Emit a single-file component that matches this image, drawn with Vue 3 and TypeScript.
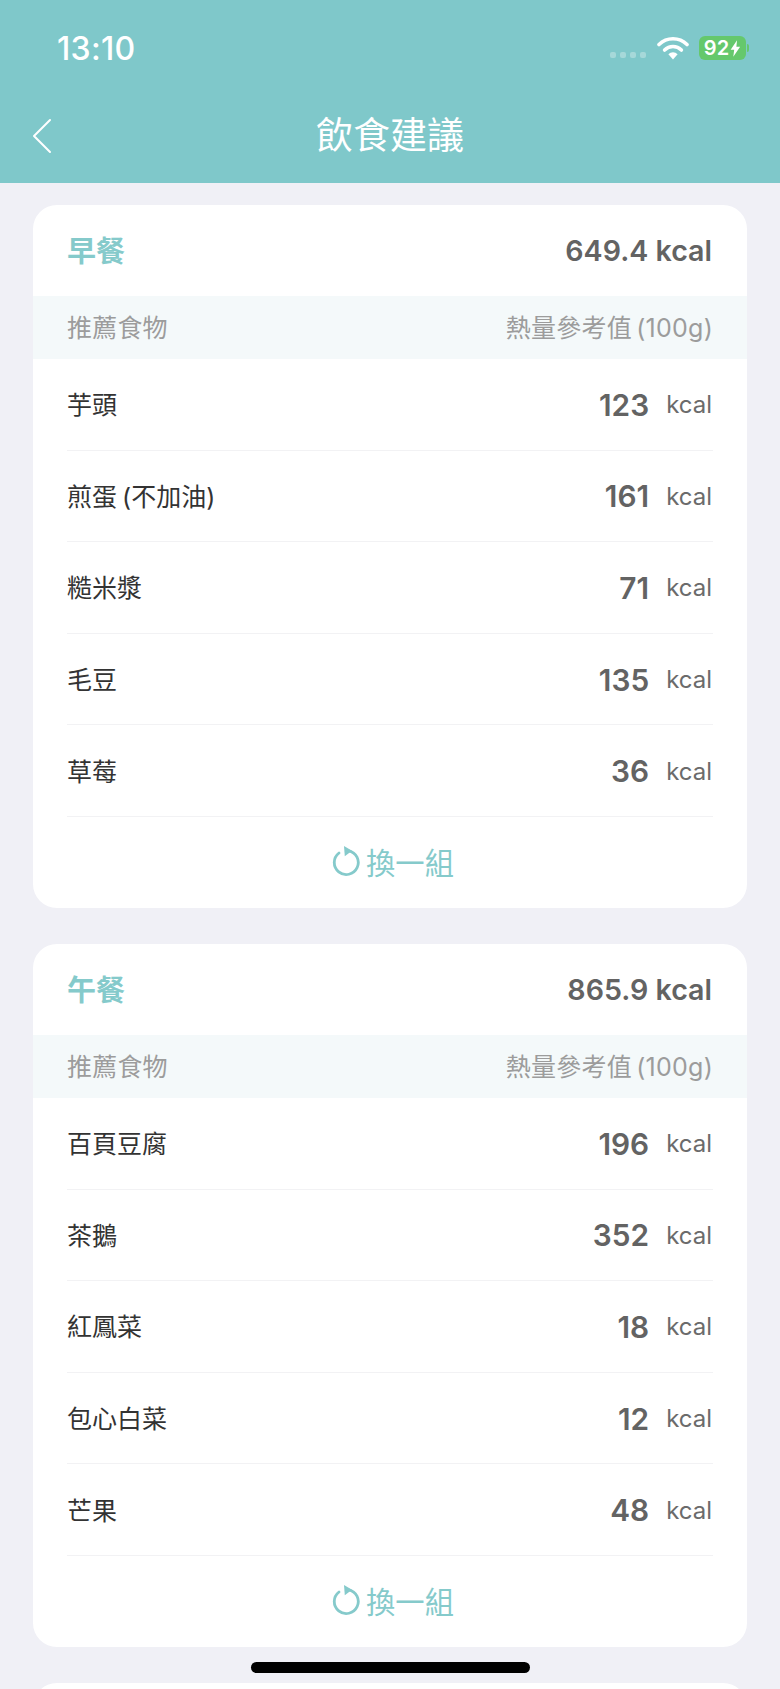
<script setup lang="ts">
interface Food { name: string; kcal: number }
interface Meal { title: string; total: string; foods: Food[] }
const meals: Meal[] = [
  { title: '早餐', total: '649.4 kcal', foods: [
    { name: '芋頭', kcal: 123 }, { name: '煎蛋 (不加油)', kcal: 161 }, { name: '糙米漿', kcal: 71 },
    { name: '毛豆', kcal: 135 }, { name: '草莓', kcal: 36 } ] },
  { title: '午餐', total: '865.9 kcal', foods: [
    { name: '百頁豆腐', kcal: 196 }, { name: '茶鵝', kcal: 352 }, { name: '紅鳳菜', kcal: 18 },
    { name: '包心白菜', kcal: 12 }, { name: '芒果', kcal: 48 } ] }
]
</script>

<template>
  <div class="page">
    <header class="top">
      <div class="status">
        <span class="time">13:10</span>
        <div class="status-right">
          <div class="dots"><i></i><i></i><i></i><i></i></div>
          <svg class="wifi" width="32" height="24" viewBox="0 0 32 24">
            <path d="M2 8.5a20 20 0 0 1 28 0" fill="none" stroke="#fff" stroke-width="3.6" stroke-linecap="round"/>
            <path d="M7.6 14a12 12 0 0 1 16.8 0" fill="none" stroke="#fff" stroke-width="3.6" stroke-linecap="round"/>
            <path d="M11.4 18.2a6.6 6.6 0 0 1 9.2 0L16 23.5z" fill="#fff"/>
          </svg>
          <div class="battery">
            <span class="pct">92</span>
            <svg width="11" height="17" viewBox="0 0 10 15"><path d="M6.4 0 0.6 8.6h3.2L3 15l6.2-9H5.8z" fill="#fff"/></svg>
          </div>
          <span class="nub"></span>
        </div>
      </div>
      <div class="nav">
        <svg class="back" width="20" height="36" viewBox="0 0 20 36">
          <path d="M18 2 2 18l16 16" fill="none" stroke="#fff" stroke-width="2" stroke-linecap="round" stroke-linejoin="round"/>
        </svg>
        <h1 class="title">飲食建議</h1>
      </div>
    </header>

    <main class="list">
      <section v-for="meal in meals" :key="meal.title" class="card">
        <div class="card-head">
          <span class="meal">{{ meal.title }}</span>
          <span class="total">{{ meal.total }}</span>
        </div>
        <div class="sub-head">
          <span class="sub-left">推薦食物</span>
          <span class="sub-right">熱量參考值 (100g)</span>
        </div>
        <div v-for="food in meal.foods" :key="food.name" class="row">
          <span class="name">{{ food.name }}</span>
          <span class="value"><b>{{ food.kcal }}</b><em>kcal</em></span>
        </div>
        <div class="swap">
          <svg width="28" height="30" viewBox="0 0 28 30">
            <path d="M7 7A12 12 0 1 0 16.7 4.8" fill="none" stroke="#85cacb" stroke-width="2.8" stroke-linecap="round"/>
            <path d="M12 0 20 4.8l-7.2 5.4z" fill="#85cacb"/>
          </svg>
          <span>換一組</span>
        </div>
      </section>
      <section class="card card-next"></section>
    </main>

    <div class="home"></div>
  </div>
</template>

<style>
html, body { margin: 0; background: #f0f0f6; }
</style>

<style scoped>
.page {
  position: relative;
  width: 780px;
  height: 1689px;
  overflow: hidden;
  background: #f0f0f6;
  font-family: Inter, "Noto Sans CJK TC", sans-serif;
}
.top {
  height: 183px;
  background: #7fc8ca;
  color: #fff;
  box-sizing: border-box;
  padding-top: 28px;
}
.status {
  display: flex;
  justify-content: space-between;
  align-items: center;
  height: 40px;
  padding: 0 31px 0 57px;
}
.time { font-size: 32px; font-weight: 500; letter-spacing: 0.3px; }
.status-right { display: flex; align-items: center; }
.dots { display: flex; gap: 4px; margin-right: 11px; margin-top: 14px; }
.dots i { width: 6px; height: 6px; border-radius: 2px; background: #a6d8d9; }
.wifi { margin-right: 10px; }
.battery {
  display: flex;
  align-items: center;
  justify-content: center;
  gap: 1px;
  width: 47px;
  height: 24px;
  border-radius: 6px;
  background: #65c86c;
}
.pct { font-size: 20px; font-weight: 600; line-height: 24px; }
.nub { width: 2px; height: 8px; margin-left: 1px; border-radius: 0 2px 2px 0; background: #65c86c; }
.nav {
  position: relative;
  display: flex;
  align-items: center;
  justify-content: center;
  height: 60px;
  margin-top: 38px;
}
.back { position: absolute; left: 32px; top: 12px; }
.title { margin: 0; font-size: 37px; font-weight: 400; line-height: 60px; }

.list {
  display: flex;
  flex-direction: column;
  gap: 36px;
  padding: 22px 33px 0;
}
.card {
  flex: none;
  background: #fff;
  border-radius: 24px;
  overflow: hidden;
}
.card-next { height: 200px; }
.card-head {
  display: flex;
  justify-content: space-between;
  align-items: center;
  height: 91px;
  padding: 0 34px;
}
.meal { font-size: 29px; font-weight: 700; color: #85cacb; margin-top: -3px; }
.total { font-size: 28.6px; font-weight: 600; color: #636363; padding-right: 1px; }
.sub-head {
  display: flex;
  justify-content: space-between;
  align-items: center;
  box-sizing: border-box;
  height: 63px;
  padding: 0 34px 3px;
  background: #f4f9fa;
  color: #9c9c9c;
}
.sub-left { font-size: 25px; letter-spacing: 0.2px; }
.sub-right { font-size: 25px; letter-spacing: 0.25px; word-spacing: -3px; }
.row {
  display: flex;
  justify-content: space-between;
  align-items: center;
  box-sizing: border-box;
  height: 91.6px;
  margin: 0 34px;
  padding-bottom: 2px;
  border-bottom: 1px solid #f2f2f4;
}
.name { font-size: 25px; color: #333; word-spacing: -2px; }
.value { display: flex; align-items: center; padding: 3px 1px 0 0; }
.value b { font-size: 29.8px; font-weight: 600; color: #636363; }
.value em { margin-left: 17px; font-size: 24px; font-style: normal; color: #6b6b6b; }
.swap {
  display: flex;
  justify-content: center;
  align-items: center;
  gap: 6px;
  height: 91px;
  padding: 0 0 2px 6px;
  box-sizing: border-box;
  color: #85cacb;
  font-size: 29.3px;
}
.home {
  position: absolute;
  left: 251px;
  top: 1662px;
  width: 279px;
  height: 11px;
  border-radius: 6px;
  background: #000;
}
</style>
